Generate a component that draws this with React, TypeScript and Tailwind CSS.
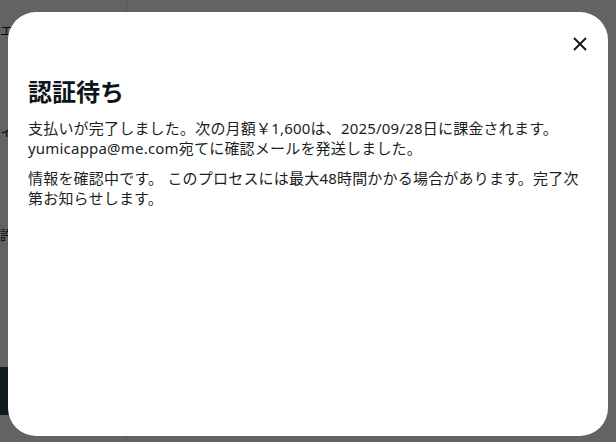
import { X } from "lucide-react";

const font = { fontFamily: '"Noto Sans", "Noto Sans CJK JP", sans-serif' };

const VerifyModal = () => {
  return (
    <div className="fixed inset-0 bg-black/[0.61] pl-[8px] pt-[12px]">
      <div className="flex h-[424px] w-[600px] flex-col rounded-[28px] bg-white px-5">
        <div className="-mr-[10px] flex justify-end pt-[14px]">
          <button className="flex h-9 w-9 items-center justify-center rounded-full text-[#0f1419]">
            <X size={22} strokeWidth={2} />
          </button>
        </div>
        <h2 className="mt-4 text-[24px] font-bold leading-[28px] text-[#0f1419]">認証待ち</h2>
        <p className="mt-3 text-[15px] leading-[20px] tracking-[0.2px] text-[#1a1f24]">
          支払いが完了しました。次の月額￥1,600は、2025/09/28日に課金されます。
          <br />
          yumicappa@me.com宛てに確認メールを発送しました。
        </p>
        <p className="mt-[10px] text-[15px] leading-[20px] tracking-[0.2px] text-[#1a1f24]">
          情報を確認中です。 このプロセスには最大48時間かかる場合があります。完了次第お知らせします。
        </p>
      </div>
    </div>
  );
};

export default function App() {
  return (
    <div className="relative h-[442px] w-[616px] overflow-hidden bg-white text-[#0f1419]" style={font}>
      <div className="flex h-full">
        <aside className="flex h-full w-[127px] flex-col border-r border-[#d9dde1] text-[13px]">
          <div className="mt-[21px]">エ</div>
          <div className="mt-[80px]">ィ</div>
          <div className="mt-[86px]">許</div>
          <div className="mt-auto mb-[27px] h-[48px] bg-[#2e4049]" />
        </aside>
        <main className="flex-1" />
      </div>
      <VerifyModal />
    </div>
  );
}
